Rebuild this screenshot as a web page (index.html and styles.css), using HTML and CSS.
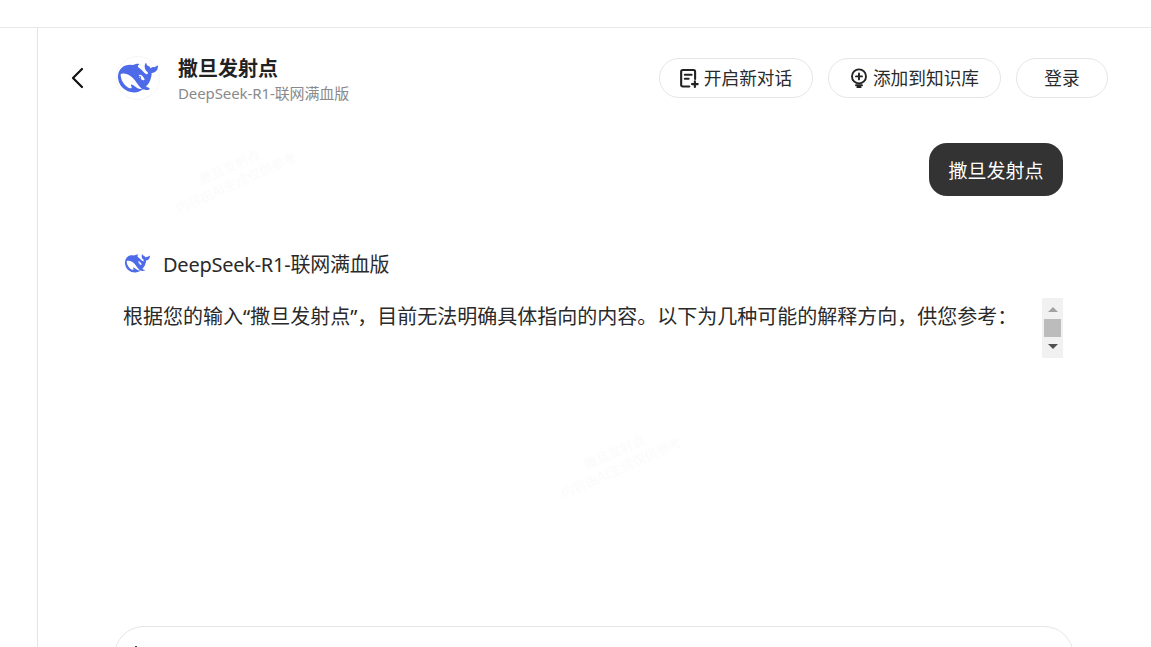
FILE: index.html
```html
<!DOCTYPE html>
<html lang="zh-CN">
<head>
    <meta charset="UTF-8">
    <meta name="viewport" content="width=device-width, initial-scale=1.0">
    <title>撒旦发射点</title>
    <link rel="stylesheet" href="styles.css">
</head>
<body>
    <svg class="svg-defs" width="0" height="0">
        <defs>
            <symbol id="whale" viewBox="0 0 24 24">
                <path d="M23.748 4.482c-.254-.124-.364.113-.512.234-.051.039-.094.09-.137.136-.372.397-.806.657-1.373.626-.829-.046-1.537.214-2.163.848-.133-.782-.575-1.248-1.247-1.548-.352-.156-.708-.311-.955-.65-.172-.241-.219-.51-.305-.774-.055-.16-.11-.323-.293-.35-.2-.031-.278.136-.356.276-.313.572-.434 1.202-.422 1.84.027 1.436.633 2.58 1.838 3.393.137.093.172.187.129.323-.082.28-.18.552-.266.833-.055.179-.137.217-.329.14a5.526 5.526 0 01-1.736-1.18c-.857-.828-1.631-1.742-2.597-2.458a11.365 11.365 0 00-.689-.471c-.985-.957.13-1.743.388-1.836.27-.098.093-.432-.779-.428-.872.004-1.67.295-2.687.684a3.055 3.055 0 01-.465.137 9.597 9.597 0 00-2.883-.102c-1.885.21-3.39 1.102-4.497 2.623C.082 8.606-.231 10.684.152 12.85c.403 2.284 1.569 4.175 3.36 5.653 1.858 1.533 3.997 2.284 6.438 2.14 1.482-.085 3.133-.284 4.994-1.86.47.234.962.327 1.78.397.63.059 1.236-.03 1.705-.128.735-.156.684-.837.419-.961-2.155-1.004-1.682-.595-2.113-.926 1.096-1.296 2.746-2.642 3.392-7.003.05-.347.007-.565 0-.845-.004-.17.035-.237.23-.256a4.173 4.173 0 001.545-.475c1.396-.763 1.96-2.015 2.093-3.517.02-.23-.004-.467-.247-.588zM11.581 18c-2.089-1.642-3.102-2.183-3.52-2.16-.392.024-.321.471-.235.763.09.288.207.486.371.739.114.167.192.416-.113.603-.673.416-1.842-.14-1.897-.167-1.361-.802-2.5-1.86-3.301-3.307-.774-1.393-1.224-2.887-1.298-4.482-.02-.386.093-.522.477-.592a4.696 4.696 0 011.529-.039c2.132.312 3.946 1.265 5.468 2.774.868.86 1.525 1.887 2.202 2.891.72 1.066 1.494 2.082 2.48 2.914.348.292.625.514.891.677-.802.09-2.14.11-3.054-.614zm1-6.44a.306.306 0 01.415-.287.302.302 0 01.2.288.306.306 0 01-.31.307.303.303 0 01-.304-.308zm3.11 1.596c-.2.081-.399.151-.59.16a1.245 1.245 0 01-.798-.254c-.274-.23-.47-.358-.552-.758a1.73 1.73 0 01.016-.588c.07-.327-.008-.537-.239-.727-.187-.156-.426-.199-.688-.199a.559.559 0 01-.254-.078c-.11-.054-.2-.19-.114-.358.028-.054.16-.186.192-.21.356-.202.767-.136 1.146.016.352.144.618.408 1.001.782.391.451.462.576.685.914.176.265.336.537.445.848.067.195-.019.354-.25.452z" fill-rule="evenodd"/>
            </symbol>
        </defs>
    </svg>

    <div class="top-bar"></div>
    <div class="layout">
        <div class="side"></div>
        <div class="main">
            <div class="header">
                <svg class="back-icon" viewBox="0 0 14 22" width="14" height="22">
                    <path d="M12 2 3 11l9 9" fill="none" stroke="#111" stroke-width="2.2" stroke-linecap="round" stroke-linejoin="round"/>
                </svg>
                <div class="avatar">
                    <svg class="whale" width="40" height="40"><use href="#whale"/></svg>
                </div>
                <div class="title-block">
                    <div class="title">撒旦发射点</div>
                    <div class="subtitle">DeepSeek-R1-联网满血版</div>
                </div>
                <div class="actions">
                    <button class="pill pill-chat">
                        <svg viewBox="0 0 18 18" width="19" height="19">
                            <path d="M8.8 16.6H2.6a1.5 1.5 0 0 1-1.5-1.5V2.5A1.5 1.5 0 0 1 2.6 1h10.2a1.5 1.5 0 0 1 1.5 1.5v7" fill="none" stroke="#222" stroke-width="2" stroke-linecap="round"/>
                            <path d="M4.6 5.4h6.4M4.6 9.2h3.6M14.1 11.6v5.4M11.4 14.3h5.4" fill="none" stroke="#222" stroke-width="2" stroke-linecap="round"/>
                        </svg>
                        开启新对话
                    </button>
                    <button class="pill pill-kb">
                        <svg viewBox="0 0 18 20" width="18" height="20">
                            <circle cx="9" cy="8.4" r="7" fill="none" stroke="#222" stroke-width="1.9"/>
                            <path d="M9 5.4v6M6 8.4h6M6 17.2h6M7.4 19.2h3.2" fill="none" stroke="#222" stroke-width="1.9" stroke-linecap="round"/>
                        </svg>
                        添加到知识库
                    </button>
                    <button class="pill pill-login">登录</button>
                </div>
            </div>

            <div class="chat">
                <div class="user-row">
                    <div class="user-bubble">撒旦发射点</div>
                </div>
                <div class="model-row">
                    <svg class="whale" width="25" height="25"><use href="#whale"/></svg>
                    <span>DeepSeek-R1-联网满血版</span>
                </div>
                <div class="answer">
                    <p>根据您的输入“撒旦发射点”，目前无法明确具体指向的内容。以下为几种可能的解释方向，供您参考：</p>
                    <div class="scrollbar">
                        <span class="arrow-up"></span>
                        <span class="thumb"></span>
                        <span class="arrow-down"></span>
                    </div>
                </div>
            </div>

            <div class="input-box">
                <svg class="input-icon" viewBox="0 0 14 14" width="14" height="14">
                    <path d="M7 1v12M1 7h12" stroke="#111" stroke-width="1.6" fill="none"/>
                </svg>
            </div>
        </div>
    </div>

    <div class="watermark wm-one">撒旦发射点<br>内容由AI生成仅供参考</div>
    <div class="watermark wm-two">撒旦发射点<br>内容由AI生成仅供参考</div>
</body>
</html>
```

FILE: styles.css
```css
* {
    margin: 0;
    padding: 0;
    box-sizing: border-box;
}

html, body {
    height: 647px;
    overflow: hidden;
}

body {
    font-family: "Noto Sans", "Noto Sans CJK SC", sans-serif;
    background-color: #fff;
    color: #222;
    position: relative;
}

.svg-defs {
    display: block;
    height: 0;
}

.top-bar {
    height: 28px;
    border-bottom: 1px solid #e8e8e8;
}

.layout {
    display: flex;
    height: 619px;
}

.side {
    width: 38px;
    flex-shrink: 0;
    border-right: 1px solid #e4e4e4;
}

.main {
    flex: 1;
    min-width: 0;
    overflow: hidden;
}

.whale {
    fill: #4d6be8;
    display: block;
    flex-shrink: 0;
}

/* header */
.header {
    display: flex;
    align-items: center;
    height: 40px;
    margin-top: 30px;
    padding: 0 43px 0 32px;
}

.back-icon {
    flex-shrink: 0;
    margin-right: 32px;
}

.avatar {
    width: 44px;
    height: 44px;
    border-radius: 50%;
    border: 1px solid #f6f6f6;
    display: flex;
    align-items: center;
    justify-content: center;
    margin-right: 18px;
}

.title-block {
    flex: 1;
}

.title {
    font-size: 20px;
    font-weight: 700;
    line-height: 28px;
    color: #222;
    margin-top: 1px;
}

.subtitle {
    font-size: 15px;
    line-height: 20px;
    letter-spacing: -0.1px;
    color: #8a8a8a;
}

.actions {
    display: flex;
    gap: 15px;
}

.pill {
    height: 40px;
    padding-bottom: 2px;
    border: 1px solid #e6e6e6;
    border-radius: 20px;
    background: #fff;
    font-family: inherit;
    font-size: 17.7px;
    color: #2a2a2a;
    display: flex;
    align-items: center;
    justify-content: center;
    gap: 5px;
}

.pill svg {
    margin-top: 2px;
}

.pill-chat {
    width: 154px;
}

.pill-kb {
    width: 173px;
}

.pill-login {
    width: 92px;
}

/* chat area */
.chat {
    padding: 45px 88px 0 85px;
}

.user-row {
    display: flex;
    justify-content: flex-end;
}

.user-bubble {
    width: 134px;
    height: 53px;
    padding-top: 2px;
    border-radius: 18px;
    background: #333;
    color: #fff;
    font-size: 19px;
    line-height: 53px;
    text-align: center;
}

.model-row {
    display: flex;
    align-items: center;
    gap: 13px;
    margin-top: 54px;
    padding-left: 2px;
    height: 26px;
    font-size: 20px;
    letter-spacing: -0.25px;
    color: #2a2a2a;
}

.answer {
    display: flex;
    justify-content: space-between;
    height: 60px;
    margin-top: 22px;
}

.answer p {
    font-size: 20px;
    line-height: 38px;
    color: #2a2a2a;
}

.scrollbar {
    width: 21px;
    background: #f1f1f1;
    display: flex;
    flex-direction: column;
    align-items: center;
}

.arrow-up {
    margin-top: 9px;
    border-left: 5px solid transparent;
    border-right: 5px solid transparent;
    border-bottom: 5px solid #a3a3a3;
}

.thumb {
    width: 17px;
    height: 18px;
    margin-top: 7px;
    background: #bcbcbc;
}

.arrow-down {
    margin-top: 7px;
    border-left: 5px solid transparent;
    border-right: 5px solid transparent;
    border-top: 5px solid #505050;
}

/* input */
.input-box {
    width: 960px;
    height: 120px;
    margin: 268px 0 0 76px;
    border: 1px solid #e6e6e6;
    border-radius: 30px;
    padding: 18px 0 0 14px;
}

.input-icon {
    display: block;
}

/* faint page watermark */
.watermark {
    position: absolute;
    font-size: 13px;
    line-height: 17px;
    color: #fbfbfb;
    white-space: nowrap;
    text-align: center;
    transform: rotate(-24deg);
}

.wm-one {
    left: 168px;
    top: 158px;
}

.wm-two {
    left: 553px;
    top: 443px;
}
```
